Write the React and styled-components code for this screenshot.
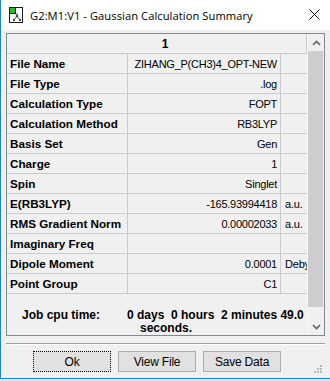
import React from 'react'
import styled, { createGlobalStyle } from 'styled-components'

const GlobalStyle = createGlobalStyle`
  html, body {
    margin: 0;
    padding: 0;
    background: #e8e8e8;
  }
  * {
    box-sizing: border-box;
  }
`

const rows = [
  { label: 'File Name', value: 'ZIHANG_P(CH3)4_OPT-NEW' },
  { label: 'File Type', value: '.log' },
  { label: 'Calculation Type', value: 'FOPT' },
  { label: 'Calculation Method', value: 'RB3LYP' },
  { label: 'Basis Set', value: 'Gen' },
  { label: 'Charge', value: '1' },
  { label: 'Spin', value: 'Singlet' },
  { label: 'E(RB3LYP)', value: '-165.93994418', unit: 'a.u.' },
  { label: 'RMS Gradient Norm', value: '0.00002033', unit: 'a.u.' },
  { label: 'Imaginary Freq', value: '' },
  { label: 'Dipole Moment', value: '0.0001', unit: 'Debye' },
  { label: 'Point Group', value: 'C1' },
]

const AppIcon = () => (
  <svg width="15" height="16" viewBox="0 0 15 16">
    <rect x="0.5" y="0.5" width="13" height="15" fill="#fff" stroke="#1a1a1a" />
    <path d="M8 9 L5 13 M8 9 L11 13 M8 9 L8 6" stroke="#555" strokeWidth="1" />
    <circle cx="8" cy="9" r="1.3" fill="#444" />
    <circle cx="5" cy="13" r="1.2" fill="#444" />
    <circle cx="11" cy="13" r="1.2" fill="#444" />
    <rect x="0.5" y="0.5" width="6" height="6" fill="#22c022" stroke="#1a1a1a" />
  </svg>
)

const CloseIcon = () => (
  <svg width="11" height="11" viewBox="0 0 11 11">
    <path d="M0.5 0.5 L10.5 10.5 M10.5 0.5 L0.5 10.5" stroke="#111" strokeWidth="1" />
  </svg>
)

const Chevron = ({ down }) => (
  <svg width="9" height="6" viewBox="0 0 9 6">
    <path
      d={down ? 'M1 1 L4.5 4.5 L8 1' : 'M1 5 L4.5 1.5 L8 5'}
      stroke="#606060"
      strokeWidth="1.6"
      fill="none"
    />
  </svg>
)

const Grip = () => (
  <svg width="9" height="9" viewBox="0 0 9 9">
    {[
      [6, 0],
      [3, 3],
      [6, 3],
      [0, 6],
      [3, 6],
      [6, 6],
    ].map(([x, y]) => (
      <rect key={`${x}-${y}`} x={x} y={y} width="2" height="2" fill="#b8b8b8" />
    ))}
  </svg>
)

const App = () => {
  return (
    <>
      <GlobalStyle />
      <Window>
        <TitleBar>
          <IconSlot>
            <AppIcon />
          </IconSlot>
          <Title>G2:M1:V1 - Gaussian Calculation Summary</Title>
          <CloseButton>
            <CloseIcon />
          </CloseButton>
        </TitleBar>

        <Body>
          <Frame>
            <Viewport>
              <HeaderRow>1</HeaderRow>
              <Grid>
                {rows.map((row) => (
                  <React.Fragment key={row.label}>
                    <LabelCell>{row.label}</LabelCell>
                    <ValueCell>{row.value}</ValueCell>
                    <UnitCell>{row.unit}</UnitCell>
                  </React.Fragment>
                ))}
              </Grid>
              <JobArea>
                <JobLabel>Job cpu time:</JobLabel>
                <JobValue>
                  <span>0 days&nbsp;&nbsp;0 hours&nbsp;&nbsp;2 minutes 49.0</span>
                  <JobSecondLine>seconds.</JobSecondLine>
                </JobValue>
              </JobArea>
            </Viewport>
            <Scrollbar>
              <ScrollArrow>
                <Chevron />
              </ScrollArrow>
              <Track>
                <Thumb />
              </Track>
              <ScrollArrow>
                <Chevron down />
              </ScrollArrow>
            </Scrollbar>
          </Frame>

          <Separator />

          <Footer>
            <Button $focused>Ok</Button>
            <Button>View File</Button>
            <Button>Save Data</Button>
            <GripSlot>
              <Grip />
            </GripSlot>
          </Footer>
        </Body>
      </Window>
    </>
  )
}

const Window = styled.div`
  width: 330px;
  height: 379px;
  display: flex;
  flex-direction: column;
  border-left: 1px solid #1883d7;
  border-bottom: 1px solid #1883d7;
  background: #f0f0f0;
  font-family: 'Liberation Sans', Arial, sans-serif;
  color: #000;
`

const TitleBar = styled.div`
  height: 30px;
  flex: none;
  display: flex;
  align-items: center;
  background: #fff;
  padding-left: 8px;
`

const IconSlot = styled.div`
  display: flex;
  width: 15px;
  height: 16px;
  margin-top: -1px;
`

const Title = styled.div`
  margin-left: 6px;
  font-family: 'Open Sans', 'Noto Sans', sans-serif;
  font-size: 11.2px;
  letter-spacing: 0.05px;
  color: #000;
  white-space: nowrap;
`

const CloseButton = styled.div`
  margin-left: auto;
  width: 30px;
  height: 30px;
  display: flex;
  align-items: center;
  justify-content: center;
  padding-right: 2px;
  margin-top: -2px;
`

const Body = styled.div`
  flex: 1;
  display: flex;
  flex-direction: column;
  padding: 3px 5px 0 5px;
`

const Frame = styled.div`
  height: 303px;
  flex: none;
  display: flex;
  border: 1px solid #828790;
  background: #f0f0f0;
`

const Viewport = styled.div`
  width: 300px;
  display: flex;
  flex-direction: column;
  overflow: hidden;
`

const HeaderRow = styled.div`
  height: 20px;
  flex: none;
  display: flex;
  align-items: center;
  justify-content: center;
  padding-left: 17px;
  border-bottom: 1px solid #cacaca;
  border-right: 1px solid #cacaca;
  font-weight: bold;
  font-size: 12px;
`

const Grid = styled.div`
  display: grid;
  grid-template-columns: 121px 153px 26px;
  grid-auto-rows: 20px;
`

const Cell = styled.div`
  display: flex;
  align-items: center;
  border-bottom: 1px solid #cacaca;
  white-space: nowrap;
  overflow: hidden;
`

const LabelCell = styled(Cell)`
  padding-left: 3px;
  border-right: 1px solid #cacaca;
  font-weight: bold;
  font-size: 11.7px;
`

const ValueCell = styled(Cell)`
  justify-content: flex-end;
  padding-right: 3px;
  border-right: 1px solid #cacaca;
  font-size: 11px;
  letter-spacing: -0.25px;
`

const UnitCell = styled(Cell)`
  padding-left: 4px;
  font-size: 11px;
  letter-spacing: -0.2px;
`

const JobArea = styled.div`
  flex: 1;
  display: flex;
  padding: 15px 0 0 15px;
  font-weight: bold;
  font-size: 12px;
  line-height: 13px;
`

const JobLabel = styled.div`
  width: 105px;
  flex: none;
`

const JobValue = styled.div`
  display: flex;
  flex-direction: column;
  white-space: nowrap;
`

const JobSecondLine = styled.span`
  padding-left: 13px;
`

const Scrollbar = styled.div`
  width: 17px;
  flex: none;
  display: flex;
  flex-direction: column;
  background: #f0f0f0;
  border-left: 1px solid #f7f7f7;
`

const ScrollArrow = styled.div`
  height: 17px;
  flex: none;
  display: flex;
  align-items: center;
  justify-content: center;
`

const Track = styled.div`
  flex: 1;
  display: flex;
  flex-direction: column;
  padding: 0 1px 0 0;
`

const Thumb = styled.div`
  height: 256px;
  background: #cdcdcd;
`

const Separator = styled.div`
  height: 2px;
  flex: none;
  margin-top: 7px;
  border-top: 1px solid #a0a0a0;
  border-bottom: 1px solid #fff;
`

const Footer = styled.div`
  flex: 1;
  display: flex;
  align-items: flex-start;
  gap: 7px;
  padding: 6px 2px 0 27px;
`

const Button = styled.div`
  width: 78px;
  height: 21px;
  display: flex;
  align-items: center;
  justify-content: center;
  background: #e1e1e1;
  border: 1px ${(p) => (p.$focused ? 'dotted #000' : 'solid #adadad')};
  font-family: 'Liberation Sans', Arial, sans-serif;
  font-size: 12px;
  letter-spacing: -0.2px;
  color: #000;
`

const GripSlot = styled.div`
  margin-left: auto;
  align-self: flex-end;
  margin-bottom: 4px;
  display: flex;
`

export default App
